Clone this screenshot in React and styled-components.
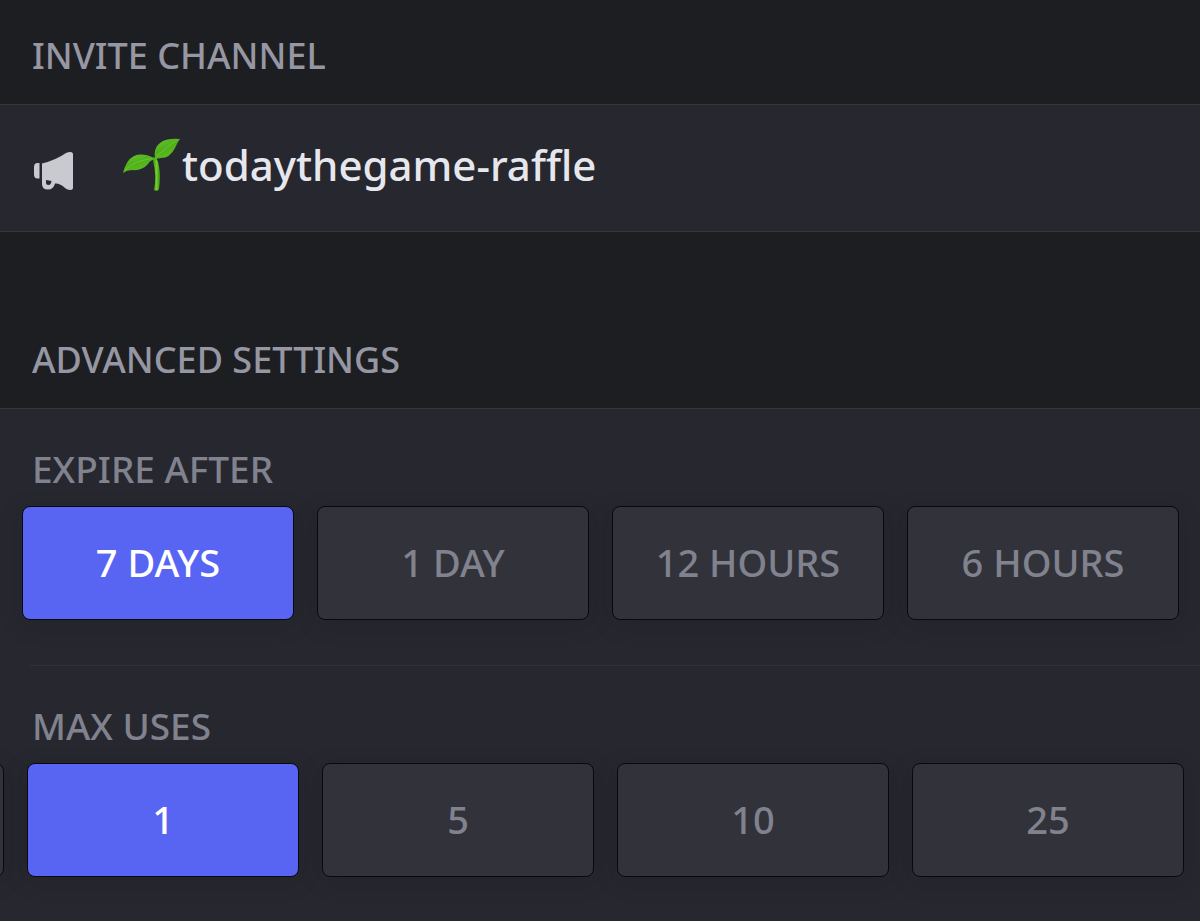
import React, { useState } from "react"
import styled, { createGlobalStyle } from "styled-components"

const GlobalStyle = createGlobalStyle`
  * {
    box-sizing: border-box;
  }

  body {
    margin: 0;
    background: #27272f;
    font-family: "Noto Sans", sans-serif;
    font-weight: 500;
  }
`

const Page = styled.main`
  min-height: 100vh;
  overflow: hidden;
  background: #27272f;
`

const SectionHeader = styled.header`
  background: #1d1e22;
  border-bottom: 1px solid #34353b;
  padding: ${props => (props.$spaced ? "104px" : "32px")} 32px 24px;
`

const SectionTitle = styled.h2`
  margin: 0;
  color: #9697a3;
  font-size: 36px;
  line-height: 48px;
  font-weight: 500;
`

const ChannelRow = styled.a`
  display: flex;
  align-items: center;
  padding: 28px 32px 34px;
  border-bottom: 1px solid #34353b;
  color: #e6e7ec;
  text-decoration: none;
`

const MegaphoneIcon = styled.svg`
  flex: none;
  width: 44px;
  height: 44px;
  margin: 16px 46px 0 0;
`

const SeedlingIcon = styled.svg`
  flex: none;
  width: 60px;
  height: 60px;
`

const ChannelName = styled.span`
  font-size: 42px;
  line-height: 64px;
`

const Setting = styled.section`
  padding-top: 36px;
`

const Divider = styled.hr`
  margin: 0 0 0 30px;
  border: none;
  border-top: 1px solid #303138;
`

const SettingLabel = styled.h3`
  margin: 0 32px;
  color: #80828e;
  font-size: 37px;
  line-height: 48px;
  font-weight: 500;
`

const Options = styled.div`
  display: flex;
  justify-content: flex-end;
  gap: 23px;
  overflow: hidden;
  padding: 13px ${props => (props.$scrolled ? "16px 45px 27px" : "21px 45px 22px")};
`

const Option = styled.button`
  flex: 0 0 calc((100% - 69px) / 4);
  height: 114px;
  padding: 0 0 2px;
  border: 1px solid #08080f;
  border-radius: 8px;
  background: ${props => (props.$selected ? "#5865f2" : "#32323b")};
  color: ${props => (props.$selected ? "#ffffff" : "#80828e")};
  box-shadow: 0 4px 24px rgba(20, 22, 28, 0.15);
  font-family: inherit;
  font-size: 38px;
  line-height: 48px;
  font-weight: 500;
  cursor: pointer;
`

const Megaphone = () => (
  <MegaphoneIcon viewBox="0 0 44 44" aria-hidden="true">
    <g fill="#c9cad0">
      <path d="M5.500 12H7.500V27.500H5.500Q2 27.500 2 23.500V16Q2 12 5.500 12Z" />
      <path
        fillRule="evenodd"
        d="M10 12.500Q24 9 34 2Q36 1 38.500 1Q41 1 41 3.500V36.500Q41 39 38.500 39Q35 39 33 37Q28 32 23 32.500Q21.500 38.500 16 38.500Q10 38.500 10 33ZM14 29V31.500Q14 34 16.500 34Q19 34 19.500 30Z"
      />
    </g>
  </MegaphoneIcon>
)

const Seedling = () => (
  <SeedlingIcon viewBox="0 0 60 60" role="img" aria-label="seedling">
    <defs>
      <linearGradient id="leaf" x1="0" y1="0" x2="0.6" y2="1">
        <stop offset="0" stopColor="#6cc831" />
        <stop offset="0.5" stopColor="#4fb01c" />
        <stop offset="1" stopColor="#62bd22" />
      </linearGradient>
      <linearGradient id="stem">
        <stop offset="0" stopColor="#358c12" />
        <stop offset="0.5" stopColor="#73cf28" />
        <stop offset="1" stopColor="#358c12" />
      </linearGradient>
    </defs>
    <path fill="url(#stem)" d="M31 22Q36 23 37 31Q39 42 37 54Q36 57 32 55Q35 41 31 26Z" />
    <path fill="url(#leaf)" d="M1 38Q4 25 12 21Q21 17 34 24Q28 25 26 29Q20 36 10 35Q5 35 1 38Z" />
    <path fill="url(#leaf)" d="M33 25Q31 13 38 8Q44 3 58 4Q55 8 53 13Q48 23 39 23Q35 23 33 25Z" />
    <path
      fill="none"
      stroke="#7fd23c"
      strokeOpacity="0.6"
      d="M3 35Q12 26 30 23.500M35 21Q43 13 55 5"
    />
  </SeedlingIcon>
)

const OptionGroup = ({ label, options, initial, scrolled }) => {
  const [selected, setSelected] = useState(initial)
  return (
    <Setting>
      <SettingLabel>{label}</SettingLabel>
      <Options role="group" aria-label={label} $scrolled={scrolled}>
        {scrolled && <Option type="button" aria-label="No limit" />}
        {options.map(option => (
          <Option
            key={option}
            type="button"
            aria-pressed={option === selected}
            $selected={option === selected}
            onClick={() => setSelected(option)}
          >
            {option}
          </Option>
        ))}
      </Options>
    </Setting>
  )
}

const App = () => (
  <Page>
    <GlobalStyle />
    <SectionHeader>
      <SectionTitle>INVITE CHANNEL</SectionTitle>
    </SectionHeader>
    <ChannelRow href="#channel">
      <Megaphone />
      <Seedling />
      <ChannelName>todaythegame-raffle</ChannelName>
    </ChannelRow>
    <SectionHeader $spaced>
      <SectionTitle>ADVANCED SETTINGS</SectionTitle>
    </SectionHeader>
    <OptionGroup
      label="EXPIRE AFTER"
      options={["7 DAYS", "1 DAY", "12 HOURS", "6 HOURS"]}
      initial="7 DAYS"
    />
    <Divider />
    <OptionGroup label="MAX USES" options={["1", "5", "10", "25"]} initial="1" scrolled />
  </Page>
)

export default App
